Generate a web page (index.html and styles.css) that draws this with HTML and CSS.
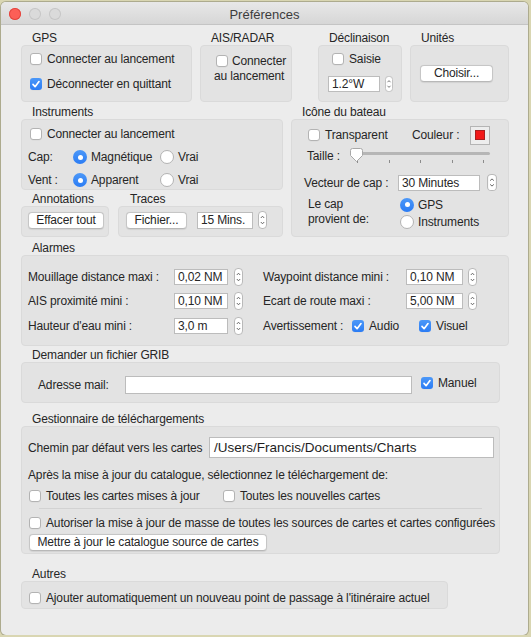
FILE: index.html
```html
<!DOCTYPE html>
<html lang="fr">
<head>
<meta charset="utf-8">
<title>Préférences</title>
<link rel="stylesheet" href="styles.css">
</head>
<body>
<div class="window">
  <div class="titlebar">
    <div class="lights"><span class="light red"></span><span class="light"></span><span class="light"></span></div>
    <div class="title">Préférences</div>
    <div></div>
  </div>
  <div class="content">
    <!-- Row 1 -->
    <div class="row r1">
      <div class="group g-gps">
        <div class="glabel">GPS</div>
        <div class="box b-gps">
          <div class="line"><span class="cb"></span>Connecter au lancement</div>
          <div class="line"><span class="cb on"><svg viewBox="0 0 12 12" width="12" height="12"><path d="M3 6.4 L5.1 8.7 L9 3.6" fill="none" stroke="#fff" stroke-width="1.7" stroke-linecap="round" stroke-linejoin="round"/></svg></span>Déconnecter en quittant</div>
        </div>
      </div>
      <div class="group g-ais">
        <div class="glabel">AIS/RADAR</div>
        <div class="box b-ais">
          <span class="cb inl"></span>Connecter au lancement
        </div>
      </div>
      <div class="group g-decl">
        <div class="glabel">Déclinaison</div>
        <div class="box b-decl">
          <div class="line decl-cb"><span class="cb"></span>Saisie</div>
          <div class="fieldrow">
            <div class="field f-decl">1.2°W</div>
            <svg class="stepper st-small" viewBox="0 0 9 18" preserveAspectRatio="none"><rect x="0.5" y="0.5" width="8" height="17" rx="3.5" fill="#fff" stroke="#b9b9b9"/><path d="M2.8 7 L4.5 5.2 L6.2 7" fill="none" stroke="#5a5a5a" stroke-width="0.9"/><path d="M2.8 11 L4.5 12.8 L6.2 11" fill="none" stroke="#5a5a5a" stroke-width="0.9"/></svg>
          </div>
        </div>
      </div>
      <div class="group g-unit">
        <div class="glabel">Unités</div>
        <div class="box b-unit">
          <div class="btn b-choisir">Choisir...</div>
        </div>
      </div>
    </div>

    <!-- Row 2 -->
    <div class="row r2">
      <div class="leftcol">
        <div class="group">
          <div class="glabel">Instruments</div>
          <div class="box b-inst">
            <div class="line inst-cb"><span class="cb"></span>Connecter au lancement</div>
            <div class="radrow">
              <span class="rlabel">Cap:</span>
              <span class="ropt"><span class="rb on"></span>Magnétique</span>
              <span class="ropt"><span class="rb"></span>Vrai</span>
            </div>
            <div class="radrow">
              <span class="rlabel">Vent :</span>
              <span class="ropt"><span class="rb on"></span>Apparent</span>
              <span class="ropt"><span class="rb"></span>Vrai</span>
            </div>
          </div>
        </div>
        <div class="row r2b">
          <div class="group g-annot">
            <div class="glabel">Annotations</div>
            <div class="box b-annot">
              <div class="btn b-effacer">Effacer tout</div>
            </div>
          </div>
          <div class="group g-traces">
            <div class="glabel gl-traces">Traces</div>
            <div class="box b-traces">
              <div class="btn b-fichier">Fichier...</div>
              <div class="field f-traces">15 Mins.</div>
              <svg class="stepper st-traces" viewBox="0 0 9 18" preserveAspectRatio="none"><rect x="0.5" y="0.5" width="8" height="17" rx="3.5" fill="#fff" stroke="#b9b9b9"/><path d="M2.8 7 L4.5 5.2 L6.2 7" fill="none" stroke="#5a5a5a" stroke-width="0.9"/><path d="M2.8 11 L4.5 12.8 L6.2 11" fill="none" stroke="#5a5a5a" stroke-width="0.9"/></svg>
            </div>
          </div>
        </div>
      </div>
      <div class="group g-icone">
        <div class="glabel">Icône du bateau</div>
        <div class="box b-icone">
          <div class="ic-r1">
            <span class="ic-transp"><span class="cb"></span>Transparent</span>
            <span class="ic-coul">Couleur :</span>
            <span class="swatch"><span class="swatch-in"></span></span>
          </div>
          <div class="ic-r2">
            <span class="ic-taille">Taille :</span>
            <div class="slider">
              <div class="track"></div>
              <div class="ticks"><i></i><i></i><i></i><i></i><i></i></div>
              <svg class="thumb" viewBox="0 0 13 15" width="13" height="15"><path d="M2.5 0.5 H10.5 Q12.5 0.5 12.5 2.5 V7.5 L6.5 13.5 L0.5 7.5 V2.5 Q0.5 0.5 2.5 0.5 Z" fill="#fff" stroke="#a8a8a8"/></svg>
            </div>
          </div>
          <div class="ic-r3">
            <span class="ic-vlabel">Vecteur de cap :</span>
            <div class="field f-vect">30 Minutes</div>
            <svg class="stepper st-vect" viewBox="0 0 9 18" preserveAspectRatio="none"><rect x="0.5" y="0.5" width="8" height="17" rx="3.5" fill="#fff" stroke="#b9b9b9"/><path d="M2.8 7 L4.5 5.2 L6.2 7" fill="none" stroke="#5a5a5a" stroke-width="0.9"/><path d="M2.8 11 L4.5 12.8 L6.2 11" fill="none" stroke="#5a5a5a" stroke-width="0.9"/></svg>
          </div>
          <div class="ic-r4">
            <div class="ic-caplabel">Le cap<br>provient de:</div>
            <div class="ic-radios">
              <div class="ic-ropt"><span class="rb on"></span>GPS</div>
              <div class="ic-ropt"><span class="rb"></span>Instruments</div>
            </div>
          </div>
        </div>
      </div>
    </div>

    <!-- Alarmes -->
    <div class="group g-alarm">
      <div class="glabel">Alarmes</div>
      <div class="box b-alarm">
        <div class="acol acol-l">
          <div class="arow"><span class="al-l">Mouillage distance maxi :</span><div class="field f-al-l">0,02 NM</div><svg class="stepper st-al st-al-l" viewBox="0 0 9 18" preserveAspectRatio="none"><rect x="0.5" y="0.5" width="8" height="17" rx="3.5" fill="#fff" stroke="#b9b9b9"/><path d="M2.8 7 L4.5 5.2 L6.2 7" fill="none" stroke="#5a5a5a" stroke-width="0.9"/><path d="M2.8 11 L4.5 12.8 L6.2 11" fill="none" stroke="#5a5a5a" stroke-width="0.9"/></svg></div>
          <div class="arow"><span class="al-l">AIS proximité mini :</span><div class="field f-al-l">0,10 NM</div><svg class="stepper st-al st-al-l" viewBox="0 0 9 18" preserveAspectRatio="none"><rect x="0.5" y="0.5" width="8" height="17" rx="3.5" fill="#fff" stroke="#b9b9b9"/><path d="M2.8 7 L4.5 5.2 L6.2 7" fill="none" stroke="#5a5a5a" stroke-width="0.9"/><path d="M2.8 11 L4.5 12.8 L6.2 11" fill="none" stroke="#5a5a5a" stroke-width="0.9"/></svg></div>
          <div class="arow"><span class="al-l">Hauteur d'eau mini :</span><div class="field f-al-l">3,0 m</div><svg class="stepper st-al st-al-l" viewBox="0 0 9 18" preserveAspectRatio="none"><rect x="0.5" y="0.5" width="8" height="17" rx="3.5" fill="#fff" stroke="#b9b9b9"/><path d="M2.8 7 L4.5 5.2 L6.2 7" fill="none" stroke="#5a5a5a" stroke-width="0.9"/><path d="M2.8 11 L4.5 12.8 L6.2 11" fill="none" stroke="#5a5a5a" stroke-width="0.9"/></svg></div>
        </div>
        <div class="acol acol-r">
          <div class="arow"><span class="al-r">Waypoint distance mini :</span><div class="field f-al-r">0,10 NM</div><svg class="stepper st-al st-al-r" viewBox="0 0 9 18" preserveAspectRatio="none"><rect x="0.5" y="0.5" width="8" height="17" rx="3.5" fill="#fff" stroke="#b9b9b9"/><path d="M2.8 7 L4.5 5.2 L6.2 7" fill="none" stroke="#5a5a5a" stroke-width="0.9"/><path d="M2.8 11 L4.5 12.8 L6.2 11" fill="none" stroke="#5a5a5a" stroke-width="0.9"/></svg></div>
          <div class="arow"><span class="al-r">Ecart de route maxi :</span><div class="field f-al-r">5,00 NM</div><svg class="stepper st-al st-al-r" viewBox="0 0 9 18" preserveAspectRatio="none"><rect x="0.5" y="0.5" width="8" height="17" rx="3.5" fill="#fff" stroke="#b9b9b9"/><path d="M2.8 7 L4.5 5.2 L6.2 7" fill="none" stroke="#5a5a5a" stroke-width="0.9"/><path d="M2.8 11 L4.5 12.8 L6.2 11" fill="none" stroke="#5a5a5a" stroke-width="0.9"/></svg></div>
          <div class="arow"><span class="al-av">Avertissement :</span><span class="av-opt"><span class="cb on"><svg viewBox="0 0 12 12" width="12" height="12"><path d="M3 6.4 L5.1 8.7 L9 3.6" fill="none" stroke="#fff" stroke-width="1.7" stroke-linecap="round" stroke-linejoin="round"/></svg></span>Audio</span><span class="av-opt2"><span class="cb on"><svg viewBox="0 0 12 12" width="12" height="12"><path d="M3 6.4 L5.1 8.7 L9 3.6" fill="none" stroke="#fff" stroke-width="1.7" stroke-linecap="round" stroke-linejoin="round"/></svg></span>Visuel</span></div>
        </div>
      </div>
    </div>

    <!-- GRIB -->
    <div class="group g-grib">
      <div class="glabel">Demander un fichier GRIB</div>
      <div class="box b-grib">
        <span class="grib-label">Adresse mail:</span>
        <div class="field f-mail"></div>
        <span class="grib-man"><span class="cb on"><svg viewBox="0 0 12 12" width="12" height="12"><path d="M3 6.4 L5.1 8.7 L9 3.6" fill="none" stroke="#fff" stroke-width="1.7" stroke-linecap="round" stroke-linejoin="round"/></svg></span>Manuel</span>
      </div>
    </div>

    <!-- Gestionnaire -->
    <div class="group g-gest">
      <div class="glabel">Gestionnaire de téléchargements</div>
      <div class="box b-gest">
        <div class="gest-path"><span class="gp-label">Chemin par défaut vers les cartes</span><div class="field f-path">/Users/Francis/Documents/Charts</div></div>
        <div class="gest-text">Après la mise à jour du catalogue, sélectionnez le téléchargement de:</div>
        <div class="gest-cbs">
          <span class="gc1"><span class="cb"></span>Toutes les cartes mises à jour</span>
          <span class="gc2"><span class="cb"></span>Toutes les nouvelles cartes</span>
        </div>
        <div class="sep"></div>
        <div class="gest-auto"><span class="cb"></span>Autoriser la mise à jour de masse de toutes les sources de cartes et cartes configurées</div>
        <div class="btn b-maj">Mettre à jour le catalogue source de cartes</div>
      </div>
    </div>

    <!-- Autres -->
    <div class="group g-autres">
      <div class="glabel">Autres</div>
      <div class="box b-autres">
        <div class="autres-line"><span class="cb"></span>Ajouter automatiquement un nouveau point de passage à l'itinéraire actuel</div>
      </div>
    </div>
  </div>
</div>
</body>
</html>
```

FILE: styles.css
```css
body {
  margin: 0;
  background: #d9d6b2;
  font-family: "Liberation Sans", Arial, sans-serif;
  font-size: 12px;
  letter-spacing: -0.15px;
  color: #262626;
}

.window {
  margin: 2px 0 0 1px;
  width: 527px;
  height: 633px;
  background: #ececec;
  border-radius: 5px;
  box-shadow: 0 0 0 1px rgba(0, 0, 0, 0.2);
  overflow: hidden;
}

.titlebar {
  height: 22px;
  border-bottom: 1px solid #c4c4c4;
  background: linear-gradient(#e8e8e8, #d6d6d6);
  display: grid;
  grid-template-columns: 1fr auto 1fr;
  align-items: center;
}

.lights {
  display: flex;
  gap: 8px;
  padding: 2px 0 0 8px;
}

.light {
  width: 12px;
  height: 12px;
  border-radius: 50%;
  background: #dadada;
  box-shadow: inset 0 0 0 1px #c6c6c6;
}

.light.red {
  background: #fc5f57;
  box-shadow: inset 0 0 0 1px #e2463f;
}

.title {
  font-size: 13px;
  letter-spacing: 0;
  color: #3c3c3c;
  padding-top: 2px;
}

.content {
  padding: 6px 0 0 20px;
}

.row {
  display: flex;
}

.group {
  display: flex;
  flex-direction: column;
}

.glabel {
  height: 14px;
  line-height: 14px;
  padding-left: 11px;
  white-space: nowrap;
}

.box {
  background: #e3e3e3;
  border: 1px solid #dadada;
  border-radius: 4px;
  box-sizing: border-box;
}

/* controls */
.cb {
  display: inline-flex;
  flex: none;
  width: 12px;
  height: 12px;
  box-sizing: border-box;
  background: #fff;
  border: 1px solid #b3b3b3;
  border-radius: 3px;
  margin-right: 5px;
  box-shadow: 0 0.5px 0 rgba(0, 0, 0, 0.05);
}

.cb.on {
  background: linear-gradient(#4c98f8, #2b7cf4);
  border: none;
}

.rb {
  display: inline-flex;
  align-items: center;
  justify-content: center;
  flex: none;
  width: 14px;
  height: 14px;
  box-sizing: border-box;
  border-radius: 50%;
  background: #fff;
  border: 1px solid #b3b3b3;
  margin-right: 4px;
}

.rb.on {
  background: linear-gradient(#4c98f8, #2b7cf4);
  border: none;
}

.rb.on::after {
  content: "";
  width: 5px;
  height: 5px;
  border-radius: 50%;
  background: #fff;
}

.field {
  background: #fff;
  border: 1px solid #bcbcbc;
  box-sizing: border-box;
  height: 16px;
  line-height: 15px;
  padding: 0 3px;
  white-space: nowrap;
  overflow: hidden;
  flex: none;
}

.stepper {
  display: block;
  flex: none;
  width: 9px;
  height: 18px;
}

.btn {
  background: #fff;
  border: 1px solid #c6c6c6;
  border-bottom-color: #b8b8b8;
  border-radius: 4px;
  box-sizing: border-box;
  height: 17px;
  line-height: 15px;
  text-align: center;
  white-space: nowrap;
  flex: none;
  box-shadow: 0 0.5px 1px rgba(0, 0, 0, 0.08);
}

.line {
  display: flex;
  align-items: center;
  height: 18px;
  white-space: nowrap;
}

/* Row 1 */
.g-gps { width: 171px; }
.g-ais { width: 92px; margin-left: 8px; }
.g-decl { width: 84px; margin-left: 26px; }
.g-unit { width: 99px; margin-left: 8px; }

.r1 .box { height: 57px; }

.b-gps {
  padding: 4px 0 0 8px;
  display: flex;
  flex-direction: column;
  gap: 7px;
}

.b-ais {
  padding: 8px 0 0 13px;
  line-height: 15px;
}

.cb.inl {
  display: inline-block;
  vertical-align: -2px;
  margin-left: 2px;
  margin-right: 4px;
}

.b-decl {
  padding: 4px 0 0 9px;
}

.decl-cb {
  padding-left: 4px;
}

.fieldrow {
  display: flex;
  align-items: center;
  margin-top: 7px;
}

.f-decl { width: 52px; }

.st-small {
  width: 8px;
  height: 16px;
  margin: 1px 0 0 5px;
}

.b-unit {
  padding: 19px 0 0 9px;
}

.b-choisir { width: 73px; }

/* Row 2 */
.r2 { margin-top: 3px; }

.leftcol {
  width: 262px;
  display: flex;
  flex-direction: column;
}

.b-inst {
  height: 71px;
  padding: 5px 0 0 6px;
}

.inst-cb { margin-left: 2px; }

.radrow {
  display: flex;
  align-items: center;
  height: 18px;
  margin-top: 5px;
}

.rlabel { width: 45px; }

.ropt {
  display: flex;
  align-items: center;
  width: 87px;
}

.r2b { margin-top: 2px; }

.g-annot { width: 88px; }
.g-traces { width: 165px; margin-left: 9px; }
.gl-traces { padding-left: 12px; }

.b-annot, .b-traces {
  height: 31px;
  padding: 5px 0 0 6px;
  display: flex;
  align-items: flex-start;
}

.b-traces { padding-left: 7px; }

.b-effacer { width: 76px; }
.b-fichier { width: 61px; }

.f-traces {
  width: 56px;
  height: 17px;
  margin-left: 10px;
}

.st-traces { margin: -1px 0 0 5px; }

.g-icone { width: 218px; margin-left: 8px; }

.b-icone {
  height: 118px;
  padding: 5px 0 0 16px;
}

.ic-r1 {
  display: flex;
  align-items: center;
  height: 20px;
  white-space: nowrap;
}

.ic-transp {
  display: flex;
  align-items: center;
  width: 104px;
}

.ic-coul { width: 58px; }

.swatch {
  display: flex;
  align-items: center;
  justify-content: center;
  width: 20px;
  height: 19px;
  box-sizing: border-box;
  border: 1px solid #b4b4b4;
  background: #ededed;
}

.swatch-in {
  width: 10px;
  height: 10px;
  box-sizing: border-box;
  background: #f21a1a;
  border: 1px solid #a82020;
}

.ic-r2 {
  display: flex;
  align-items: center;
  height: 18px;
  margin-top: 2px;
}

.ic-taille {
  width: 43px;
  margin-left: -1px;
}

.slider {
  position: relative;
  width: 140px;
  height: 18px;
}

.track {
  margin: 5px 0 0 6px;
  height: 3px;
  border-radius: 2px;
  background: #b6b6b6;
}

.ticks {
  display: flex;
  justify-content: space-between;
  margin: 5px 6px 0 7px;
}

.ticks i {
  display: block;
  width: 1px;
  height: 3px;
  background: #8c8c8c;
}

.thumb {
  position: absolute;
  left: 0;
  top: 1px;
}

.ic-r3 {
  display: flex;
  align-items: center;
  height: 17px;
  margin: 9px 0 0 -4px;
  white-space: nowrap;
}

.ic-vlabel { width: 94px; }

.f-vect { width: 82px; }

.st-vect {
  width: 10px;
  height: 17px;
  margin-left: 7px;
}

.ic-r4 {
  display: flex;
  margin-top: 5px;
}

.ic-caplabel {
  width: 92px;
  line-height: 15px;
  padding-top: 0.5px;
}

.ic-ropt {
  display: flex;
  align-items: center;
  height: 17px;
}

/* Alarmes */
.g-alarm { margin-top: 4px; width: 488px; }

.b-alarm {
  height: 91px;
  padding: 12px 0 0 6px;
  display: flex;
}

.acol {
  display: flex;
  flex-direction: column;
  gap: 7.5px;
}

.acol-r { margin-left: 20px; }

.arow {
  display: flex;
  align-items: center;
  height: 17px;
  white-space: nowrap;
}

.al-l { width: 146px; }
.al-r { width: 143px; }
.al-av { width: 89px; }

.f-al-l { width: 54px; }
.f-al-r { width: 57px; }

.st-al-l { margin-left: 6px; }
.st-al-r { margin-left: 5px; }

.av-opt, .av-opt2 {
  display: flex;
  align-items: center;
}

.av-opt { width: 67px; }

/* GRIB */
.g-grib { margin-top: 2px; width: 479px; }

.b-grib {
  height: 41px;
  padding: 13px 0 0 16px;
  display: flex;
  align-items: flex-start;
  white-space: nowrap;
}

.grib-label {
  width: 87px;
  line-height: 18px;
}

.f-mail {
  width: 287px;
  height: 18px;
}

.grib-man {
  display: flex;
  align-items: center;
  margin-left: 9px;
  height: 12px;
  margin-top: 1px;
}

/* Gestionnaire */
.g-gest { margin-top: 9px; width: 479px; }

.b-gest {
  height: 128px;
  padding: 10px 0 0 6px;
  white-space: nowrap;
}

.gest-path {
  display: flex;
  align-items: center;
}

.gp-label { width: 181px; }

.f-path {
  width: 285px;
  height: 21px;
  line-height: 20px;
  font-size: 13.5px;
  letter-spacing: 0;
  padding: 0 4px;
  color: #1e1e1e;
}

.gest-text {
  margin-top: 10px;
  line-height: 15px;
}

.gest-cbs {
  display: flex;
  align-items: center;
  height: 15px;
  margin: 5px 0 0 1px;
}

.gc1, .gc2 {
  display: flex;
  align-items: center;
}

.gc1 { width: 194px; }

.sep {
  height: 1px;
  background: #d2d2d2;
  margin: 5px 0 0 11px;
  width: 443px;
}

.gest-auto {
  display: flex;
  align-items: center;
  height: 15px;
  margin: 6px 0 0 1px;
}

.b-maj {
  width: 238px;
  margin: 4px 0 0 1px;
}

/* Autres */
.g-autres { margin-top: 13px; width: 427px; }

.b-autres {
  height: 28px;
  padding: 8px 0 0 7px;
}

.autres-line {
  display: flex;
  align-items: center;
  height: 15px;
  white-space: nowrap;
}
```
